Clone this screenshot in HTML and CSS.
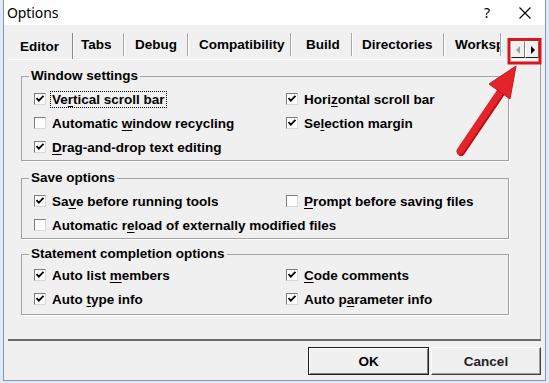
FILE: index.html
```html
<!DOCTYPE html>
<html>
<head>
<meta charset="utf-8">
<link rel="stylesheet" href="styles.css">
</head>
<body>
<div class="window">
  <div class="titlebar">
    <span class="title">Options</span>
    <span class="help">?</span>
    <svg class="close" width="12" height="12" viewBox="0 0 12 12"><path d="M0.5 0.5 L11.5 11.5 M11.5 0.5 L0.5 11.5" stroke="#000" stroke-width="1.1" fill="none"/></svg>
  </div>
  <div class="tabstrip">
    <div class="tab sel t-editor">Editor</div>
    <div class="tab t-tabs">Tabs</div>
    <div class="tab t-debug">Debug</div>
    <div class="tab t-compat">Compatibility</div>
    <div class="tab t-build">Build</div>
    <div class="tab t-dirs">Directories</div>
    <div class="tab t-works">Workspace</div>
    <div class="spin">
      <span class="spin-btn"><svg width="5" height="8" viewBox="0 0 5 8"><path d="M4 0 L0 4 L4 8 Z" fill="#a0a0a0"/></svg></span>
      <span class="spin-btn"><svg width="5" height="8" viewBox="0 0 5 8"><path d="M1 0 L5 4 L1 8 Z" fill="#000"/></svg></span>
    </div>
  </div>
  <div class="page">
    <div class="group g1">
      <span class="group-title">Window settings</span>
      <div class="grid">
        <div class="opt"><span class="cb"><svg viewBox="0 0 10 10"><path d="M1.5 4.2 L3.8 6.6 L8.5 1.8" stroke="#000" stroke-width="1.8" fill="none"/></svg></span><span class="focus">Ve<u>r</u>tical scroll bar</span></div>
        <div class="opt"><span class="cb"><svg viewBox="0 0 10 10"><path d="M1.5 4.2 L3.8 6.6 L8.5 1.8" stroke="#000" stroke-width="1.8" fill="none"/></svg></span><span>Hori<u>z</u>ontal scroll bar</span></div>
        <div class="opt"><span class="cb"></span><span>Automatic <u>w</u>indow recycling</span></div>
        <div class="opt"><span class="cb"><svg viewBox="0 0 10 10"><path d="M1.5 4.2 L3.8 6.6 L8.5 1.8" stroke="#000" stroke-width="1.8" fill="none"/></svg></span><span>Se<u>l</u>ection margin</span></div>
        <div class="opt full"><span class="cb"><svg viewBox="0 0 10 10"><path d="M1.5 4.2 L3.8 6.6 L8.5 1.8" stroke="#000" stroke-width="1.8" fill="none"/></svg></span><span><u>D</u>rag-and-drop text editing</span></div>
      </div>
    </div>
    <div class="group g2">
      <span class="group-title">Save options</span>
      <div class="grid">
        <div class="opt"><span class="cb"><svg viewBox="0 0 10 10"><path d="M1.5 4.2 L3.8 6.6 L8.5 1.8" stroke="#000" stroke-width="1.8" fill="none"/></svg></span><span>Sa<u>v</u>e before running tools</span></div>
        <div class="opt"><span class="cb"></span><span><u>P</u>rompt before saving files</span></div>
        <div class="opt full"><span class="cb"></span><span>Automatic r<u>e</u>load of externally modified files</span></div>
      </div>
    </div>
    <div class="group g3">
      <span class="group-title">Statement completion options</span>
      <div class="grid">
        <div class="opt"><span class="cb"><svg viewBox="0 0 10 10"><path d="M1.5 4.2 L3.8 6.6 L8.5 1.8" stroke="#000" stroke-width="1.8" fill="none"/></svg></span><span>Auto list <u>m</u>embers</span></div>
        <div class="opt"><span class="cb"><svg viewBox="0 0 10 10"><path d="M1.5 4.2 L3.8 6.6 L8.5 1.8" stroke="#000" stroke-width="1.8" fill="none"/></svg></span><span><u>C</u>ode comments</span></div>
        <div class="opt"><span class="cb"><svg viewBox="0 0 10 10"><path d="M1.5 4.2 L3.8 6.6 L8.5 1.8" stroke="#000" stroke-width="1.8" fill="none"/></svg></span><span>Auto <u>t</u>ype info</span></div>
        <div class="opt"><span class="cb"><svg viewBox="0 0 10 10"><path d="M1.5 4.2 L3.8 6.6 L8.5 1.8" stroke="#000" stroke-width="1.8" fill="none"/></svg></span><span>Auto p<u>a</u>rameter info</span></div>
      </div>
    </div>
  </div>
  <div class="buttons">
    <button class="btn ok">OK</button>
    <button class="btn cancel">Cancel</button>
  </div>
</div>
<svg class="annot" width="549" height="383" viewBox="0 0 549 383">
  <rect x="509" y="39.5" width="31" height="23.5" fill="none" stroke="#d9161d" stroke-width="3"/>
  <line x1="461" y1="152" x2="503" y2="90" stroke="#b80f15" stroke-width="8" stroke-linecap="round"/>
  <line x1="460" y1="151" x2="502" y2="89" stroke="#e3242b" stroke-width="7" stroke-linecap="round"/>
  <path d="M516 66 L489 84 L510 99 Z" fill="#e3242b" stroke="#c8151c" stroke-width="1" stroke-linejoin="round"/>
</svg>
</body>
</html>
```
FILE: styles.css
```css
body {
  margin: 0;
  background: #e4e9ef;
  font-family: "Liberation Sans", Arial, sans-serif;
  color: #000;
}

.window {
  position: relative;
  margin-left: 3px;
  width: 543px;
  height: 381px;
  box-sizing: border-box;
  border: 1px solid #6f9ccc;
  border-top: none;
  background: #f0f0f0;
  overflow: hidden;
}

.titlebar {
  height: 25px;
  background: #fff;
  display: flex;
  align-items: center;
  padding: 0 14px 0 3px;
  font-family: "Noto Sans", "Open Sans", sans-serif;
  font-size: 14px;
}

.title {
  letter-spacing: -0.1px;
}

.help {
  margin-left: auto;
  margin-right: 29px;
  font-size: 14px;
  font-family: "Noto Sans", sans-serif;
}

.close {
  display: block;
}

.tabstrip {
  position: relative;
  display: flex;
  align-items: flex-start;
  height: 26px;
  width: 532px;
  margin: 8px 0 0 5px;
}

.tab {
  box-sizing: border-box;
  height: 23px;
  display: flex;
  align-items: center;
  border-right: 1px solid #a8a8a8;
  box-shadow: 1px 0 0 #fff;
  font-weight: bold;
  font-size: 13.5px;
  white-space: nowrap;
  overflow: hidden;
}

.tab.sel {
  height: 26px;
  border-right-color: #8a8a8a;
}

.t-editor { width: 64px; padding-left: 11px; }
.t-tabs { width: 51px; padding-left: 8px; }
.t-debug { width: 64px; padding-left: 11px; }
.t-compat { width: 103px; padding-left: 11px; }
.t-build { width: 61px; padding-left: 15px; }
.t-dirs { width: 92px; padding-left: 10px; }
.t-works { width: 57px; padding-left: 11px; }

.spin {
  position: absolute;
  left: 502px;
  top: 8px;
  display: flex;
}

.spin-btn {
  box-sizing: border-box;
  width: 14px;
  height: 17px;
  display: flex;
  align-items: center;
  justify-content: center;
  background: #f0f0f0;
  border: 1px solid;
  border-color: #fff #808080 #202020 #fff;
}

.page {
  box-sizing: border-box;
  width: 533px;
  height: 282px;
  margin-left: 4px;
  border-top: 1px solid #fff;
  border-right: 1px solid #a0a0a0;
  border-bottom: 2px solid #6a6a6a;
  padding: 16px 0 0 13px;
}

.group {
  position: relative;
  box-sizing: border-box;
  width: 488px;
  border: 1px solid #a3a3a3;
  box-shadow: 1px 1px 0 #fff;
}

.g1 { padding: 10px 0 1px 12px; }
.g2 { margin-top: 17px; padding: 10px 0 1px 12px; }
.g3 { margin-top: 15px; padding: 8px 0 3px 12px; }

.group-title {
  position: absolute;
  top: -9px;
  left: 7px;
  padding: 0 2px;
  background: #f0f0f0;
  line-height: 16px;
  font-weight: bold;
  font-size: 13.5px;
}

.grid {
  display: grid;
  grid-template-columns: 252px auto;
  grid-auto-rows: 24px;
}

.opt {
  display: flex;
  align-items: center;
  font-weight: bold;
  font-size: 13.5px;
  white-space: nowrap;
}

.full {
  grid-column: 1 / -1;
}

.cb {
  box-sizing: border-box;
  width: 12px;
  height: 12px;
  margin-right: 6px;
  border: 1px solid;
  border-color: #7c7c7c #d8d8d8 #d8d8d8 #7c7c7c;
  background: #fff;
  display: flex;
}

.cb svg {
  width: 10px;
  height: 10px;
}

.focus {
  margin-left: -2px;
  padding: 0 1px;
  border: 1px dotted #000;
  line-height: 15px;
}

u {
  text-underline-offset: 2px;
}

.buttons {
  display: flex;
  justify-content: flex-end;
  gap: 2px;
  margin-top: 6px;
  padding-right: 4px;
}

.btn {
  box-sizing: border-box;
  height: 28px;
  background: #f0f0f0;
  font-family: "Liberation Sans", Arial, sans-serif;
  font-weight: bold;
  font-size: 13.5px;
  color: #000;
  border: 1px solid;
  border-color: #fff #404040 #404040 #fff;
  box-shadow: inset -1px -1px 0 #a0a0a0;
  padding: 0;
}

.ok {
  width: 121px;
  border-color: #202020;
  box-shadow: inset 1px 1px 0 #fff, inset -1px -1px 0 #808080;
}

.cancel {
  width: 110px;
  color: #222;
}

.annot {
  position: absolute;
  left: 0;
  top: 0;
  pointer-events: none;
}
```
